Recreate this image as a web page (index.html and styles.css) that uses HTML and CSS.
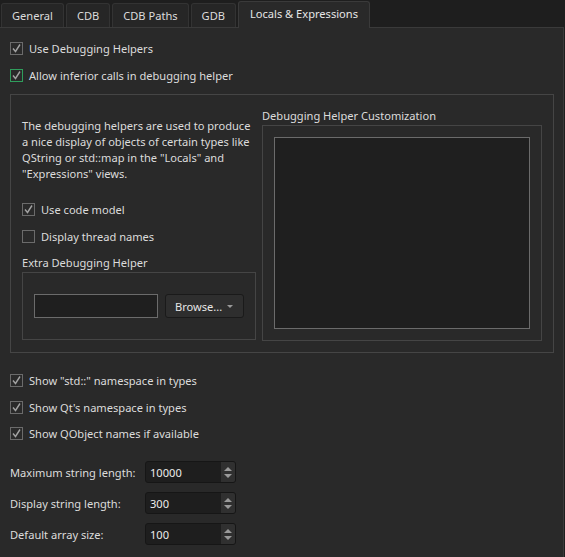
FILE: index.html
```html
<!DOCTYPE html>
<html>
<head>
<meta charset="utf-8">
<link rel="stylesheet" href="styles.css">
</head>
<body>
<div class="tabs">
  <div class="tab">General</div>
  <div class="tab">CDB</div>
  <div class="tab">CDB Paths</div>
  <div class="tab">GDB</div>
  <div class="tab active">Locals &amp; Expressions</div>
</div>
<div class="panel">
  <label class="check first"><span class="box"><svg viewBox="0 0 13 13"><path d="M3 6.5 L5.5 9.5 L10 2.5" /></svg></span>Use Debugging Helpers</label>
  <label class="check second"><span class="box focus"><svg viewBox="0 0 13 13"><path d="M3 6.5 L5.5 9.5 L10 2.5" /></svg></span>Allow inferior calls in debugging helper</label>

  <div class="group">
    <div class="col-left">
      <p class="desc">The debugging helpers are used to produce a nice display of objects of certain types like QString or std::map in the "Locals" and "Expressions" views.</p>
      <label class="check codemodel"><span class="box"><svg viewBox="0 0 13 13"><path d="M3 6.5 L5.5 9.5 L10 2.5" /></svg></span>Use code model</label>
      <label class="check threads"><span class="box"></span>Display thread names</label>
      <div class="glabel extra-label">Extra Debugging Helper</div>
      <div class="subgroup">
        <div class="lineedit"></div>
        <div class="button">Browse...<span class="tri"></span></div>
      </div>
    </div>
    <div class="col-right">
      <div class="glabel">Debugging Helper Customization</div>
      <div class="custom">
        <div class="textarea"></div>
      </div>
    </div>
  </div>

  <label class="check std"><span class="box"><svg viewBox="0 0 13 13"><path d="M3 6.5 L5.5 9.5 L10 2.5" /></svg></span>Show "std::" namespace in types</label>
  <label class="check qt"><span class="box"><svg viewBox="0 0 13 13"><path d="M3 6.5 L5.5 9.5 L10 2.5" /></svg></span>Show Qt's namespace in types</label>
  <label class="check qobj"><span class="box"><svg viewBox="0 0 13 13"><path d="M3 6.5 L5.5 9.5 L10 2.5" /></svg></span>Show QObject names if available</label>

  <div class="form">
    <div class="flabel">Maximum string length:</div>
    <div class="spin"><span class="val">10000</span><span class="arrows"><span class="up"></span><span class="down"></span></span></div>
    <div class="flabel">Display string length:</div>
    <div class="spin"><span class="val">300</span><span class="arrows"><span class="up"></span><span class="down"></span></span></div>
    <div class="flabel">Default array size:</div>
    <div class="spin"><span class="val">100</span><span class="arrows"><span class="up"></span><span class="down"></span></span></div>
  </div>
</div>
</body>
</html>
```
FILE: styles.css
```css
html, body {
  margin: 0;
  padding: 0;
  height: 100%;
  overflow: hidden;
}
body {
  background: #1e1e1e;
  color: #dcdcdc;
  font-family: "Noto Sans", "Open Sans", sans-serif;
  font-size: 11.1px;
  display: flex;
  flex-direction: column;
}
.tabs {
  display: flex;
  align-items: flex-end;
  height: 27px;
  gap: 2px;
  padding-left: 1px;
}
.tab {
  height: 24px;
  box-sizing: border-box;
  padding: 0 10px 1px;
  display: flex;
  align-items: center;
  background: #262626;
  border: 1px solid #333333;
  border-bottom: none;
  border-radius: 3px 3px 0 0;
  color: #dcdcdc;
}
.tab.active {
  height: 27px;
  background: #292929;
  border-color: #3a3a3a;
  color: #e6e6e6;
  padding: 0 11px 3px;
  margin-bottom: -1px;
  position: relative;
  z-index: 1;
}
.panel {
  flex: 1;
  background: #292929;
  border-top: 1px solid #3a3a3a;
  border-right: 1px solid #3a3a3a;
  margin-right: 1px;
  padding: 0 0 0 10px;
}
.check {
  display: flex;
  align-items: center;
  height: 20px;
  gap: 6px;
}
.box {
  width: 13px;
  height: 13px;
  box-sizing: border-box;
  border: 1px solid #6b6b6b;
  background: #2a2a2a;
  display: flex;
  align-items: center;
  justify-content: center;
  flex: none;
}
.box.focus {
  border-color: #2f9d5c;
}
.box svg {
  width: 13px;
  height: 13px;
  flex: none;
}
.box path {
  fill: none;
  stroke: #a3a3a3;
  stroke-width: 1.4;
}
.first { margin-top: 10px; }
.second { margin-top: 7px; }
.group {
  margin-top: 9px;
  width: 544px;
  height: 259px;
  box-sizing: border-box;
  border: 1px solid #454545;
  display: grid;
  grid-template-columns: 234px 280px;
  column-gap: 6px;
  padding: 0 12px 11px 11px;
}
.col-left, .col-right {
  display: flex;
  flex-direction: column;
}
.col-right {
  justify-content: flex-end;
}
.desc {
  margin: 23px 0 0 0;
  line-height: 16px;
}
.codemodel { margin-top: 17px; }
.threads { margin-top: 7px; }
.glabel {
  line-height: 16px;
}
.extra-label { margin-top: 9px; }
.subgroup {
  margin-top: 1px;
  height: 68px;
  box-sizing: border-box;
  border: 1px solid #454545;
  display: flex;
  align-items: center;
  gap: 7px;
  padding: 0 11px;
}
.lineedit {
  width: 124px;
  height: 24px;
  box-sizing: border-box;
  border: 1px solid #6b6b6b;
  background: #1f1f1f;
}
.button {
  width: 79px;
  height: 24px;
  box-sizing: border-box;
  border: 1px solid #1a1a1a;
  border-radius: 3px;
  background: #2e2e2e;
  display: flex;
  align-items: center;
  padding-left: 9px;
  color: #e6e6e6;
  position: relative;
}
.tri {
  position: absolute;
  right: 10px;
  top: 10px;
  width: 0;
  height: 0;
  border-left: 3px solid transparent;
  border-right: 3px solid transparent;
  border-top: 3px solid #9a9a9a;
}
.custom {
  margin-top: 1px;
  height: 216px;
  box-sizing: border-box;
  border: 1px solid #454545;
  padding: 11px;
}
.textarea {
  height: 100%;
  box-sizing: border-box;
  border: 1px solid #6b6b6b;
  background: #1f1f1f;
}
.std { margin-top: 17px; }
.qt { margin-top: 7px; }
.qobj { margin-top: 6px; }
.form {
  margin-top: 18px;
  display: grid;
  grid-template-columns: 135px 91px;
  row-gap: 9px;
  align-items: center;
}
.spin {
  height: 22px;
  box-sizing: border-box;
  border: 1px solid #161616;
  border-radius: 3px;
  background: #1e1e1e;
  display: flex;
  align-items: center;
  justify-content: space-between;
  color: #ececec;
}
.val { padding-left: 4px; }
.arrows {
  width: 14px;
  height: 20px;
  background: #303030;
  border-radius: 0 2px 2px 0;
  display: flex;
  flex-direction: column;
  align-items: center;
  justify-content: center;
  gap: 3px;
}
.up, .down {
  width: 0;
  height: 0;
  border-left: 4px solid transparent;
  border-right: 4px solid transparent;
}
.up { border-bottom: 4px solid #9a9a9a; }
.down { border-top: 4px solid #9a9a9a; }
```
